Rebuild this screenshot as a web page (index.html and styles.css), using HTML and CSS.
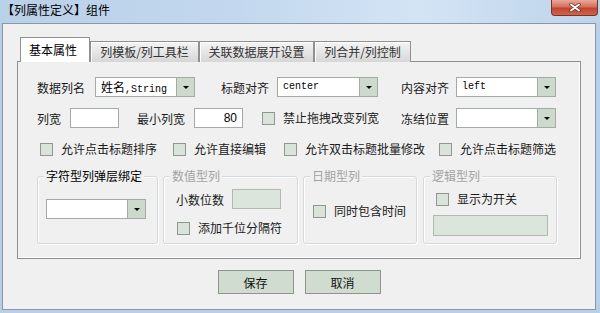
FILE: index.html
```html
<!DOCTYPE html>
<html lang="zh-CN">
<head>
    <meta charset="UTF-8">
    <title>列属性定义</title>
    <link rel="stylesheet" href="styles.css">
</head>
<body>
    <div class="window">
        <div class="titlebar">
            <span class="title">【列属性定义】组件</span>
            <div class="close">
                <svg width="12" height="9" viewBox="0 0 12 9">
                    <path d="M2 1.5 L10 7.5 M10 1.5 L2 7.5" stroke="#6a2a1c" stroke-width="3.4" stroke-linecap="round"/>
                    <path d="M2 1.5 L10 7.5 M10 1.5 L2 7.5" stroke="#ffffff" stroke-width="2" stroke-linecap="round"/>
                </svg>
            </div>
        </div>

        <div class="client">
            <div class="tabs">
                <div class="tab active">基本属性</div>
                <div class="tab t2">列模板/列工具栏</div>
                <div class="tab t3">关联数据展开设置</div>
                <div class="tab t4">列合并/列控制</div>
            </div>

            <div class="panel">
                <!-- row 1 -->
                <div class="row row1">
                    <span class="lbl w58">数据列名</span>
                    <div class="combo w100"><span class="val"><span class="cn">姓名</span>,String</span><span class="drop"></span></div>
                    <span class="lbl w56 ml26">标题对齐</span>
                    <div class="combo w101"><span class="val">center</span><span class="drop"></span></div>
                    <span class="lbl w55 ml23">内容对齐</span>
                    <div class="combo w100"><span class="val">left</span><span class="drop"></span></div>
                </div>

                <!-- row 2 -->
                <div class="row row2">
                    <span class="lbl w33">列宽</span>
                    <div class="input w49"></div>
                    <span class="lbl w57 ml18">最小列宽</span>
                    <div class="input w49 num">80</div>
                    <label class="chk ml19 w139"><span class="box"></span>禁止拖拽改变列宽</label>
                    <span class="lbl w55">冻结位置</span>
                    <div class="combo w100"><span class="val"></span><span class="drop"></span></div>
                </div>

                <!-- row 3 -->
                <div class="row row3">
                    <label class="chk w133"><span class="box"></span>允许点击标题排序</label>
                    <label class="chk w111"><span class="box"></span>允许直接编辑</label>
                    <label class="chk w155"><span class="box"></span>允许双击标题批量修改</label>
                    <label class="chk"><span class="box"></span>允许点击标题筛选</label>
                </div>

                <!-- type groups -->
                <div class="groups">
                    <div class="group g1">
                        <span class="legend">字符型列弹层绑定</span>
                        <div class="combo w100"><span class="val"></span><span class="drop"></span></div>
                    </div>
                    <div class="group g2">
                        <span class="legend off">数值型列</span>
                        <div class="line">
                            <span class="lbl w56">小数位数</span>
                            <div class="input w49 disabled"></div>
                        </div>
                        <label class="chk sep"><span class="box"></span>添加千位分隔符</label>
                    </div>
                    <div class="group g3">
                        <span class="legend off">日期型列</span>
                        <label class="chk"><span class="box"></span>同时包含时间</label>
                    </div>
                    <div class="group g4">
                        <span class="legend off">逻辑型列</span>
                        <label class="chk"><span class="box"></span>显示为开关</label>
                        <div class="input wide disabled"></div>
                    </div>
                </div>
            </div>

            <div class="buttons">
                <button class="btn">保存</button>
                <button class="btn">取消</button>
            </div>
        </div>
    </div>
</body>
</html>
```

FILE: styles.css
```css
body {
    margin: 0;
    width: 600px;
    height: 313px;
    overflow: hidden;
    background: #b7cfe9;
    font-family: 'Noto Sans CJK SC', 'Liberation Sans', sans-serif;
    font-size: 12px;
    color: #1a1a1a;
}

.window {
    width: 600px;
    height: 313px;
}

/* Title bar */
.titlebar {
    height: 23px;
    display: flex;
    justify-content: space-between;
    align-items: flex-start;
    background: linear-gradient(to right, #b9d0e9, #c3d8ee 40%, #d3e4f5 70%, #bdd3ea);
}

.title {
    padding-left: 2px;
    line-height: 20px;
    color: #000;
}

.close {
    width: 45px;
    height: 15px;
    margin-right: 2px;
    border: 1px solid #7a3328;
    border-top: none;
    border-radius: 0 0 4px 4px;
    background: linear-gradient(to bottom, #e9a99b, #d4715d 45%, #c0452e 55%, #d1644a);
    display: flex;
    align-items: center;
    justify-content: center;
}

/* Client area */
.client {
    box-sizing: border-box;
    margin-left: 2px;
    width: 594px;
    height: 287px;
    border: 1px solid #8898aa;
    background: #f0f0f0;
}

.tabs {
    display: flex;
    align-items: flex-end;
    height: 25px;
    margin: 13px 0 -1px 14px;
    padding-left: 3px;
}

.tab {
    box-sizing: border-box;
    height: 21px;
    border: 1px solid #8e9094;
    border-bottom: none;
    background: linear-gradient(to bottom, #f4f4f4, #e6e6e6 50%, #d6d6d6);
    box-shadow: inset 1px 1px 0 #fff;
    color: #333;
    line-height: 19px;
    text-align: center;
}

.tab.active {
    position: relative;
    width: 70px;
    height: 25px;
    background: #fff;
    box-shadow: none;
    color: #000;
    line-height: 23px;
    text-align: left;
    padding-left: 8px;
}

.t2 { width: 109px; }
.t3 { width: 115px; }
.t4 { width: 97px; }

.panel {
    box-sizing: border-box;
    margin-left: 14px;
    width: 564px;
    height: 198px;
    border: 1px solid #8e9094;
    box-shadow: inset -1px -1px 0 #fff;
    padding-left: 19px;
}

.row {
    display: flex;
    align-items: center;
    height: 20px;
}

.row1 { margin-top: 15px; }
.row2 { margin-top: 11px; }
.row3 { margin-top: 13px; height: 16px; padding-left: 3px; }

.lbl {
    flex: none;
    white-space: nowrap;
}

.w33 { width: 33px; }
.w55 { width: 55px; }
.w56 { width: 56px; }
.w57 { width: 57px; }
.w58 { width: 58px; }
.w111 { width: 111px; }
.w133 { width: 133px; }
.w139 { width: 139px; }
.w155 { width: 155px; }
.ml18 { margin-left: 18px; }
.ml19 { margin-left: 19px; }
.ml23 { margin-left: 23px; }
.ml26 { margin-left: 26px; }

/* Combo boxes */
.combo {
    box-sizing: border-box;
    flex: none;
    height: 20px;
    display: flex;
    border: 1px solid #a4aaa4;
    background: #fff;
}

.combo.w100 { width: 100px; }
.combo.w101 { width: 101px; }

.combo .val {
    flex: 1;
    padding-left: 5px;
    font-family: 'Liberation Mono', 'Noto Sans CJK SC', monospace;
    font-size: 10px;
    line-height: 18px;
    color: #000;
    white-space: nowrap;
    overflow: hidden;
}

.combo .val .cn {
    font-family: 'Noto Sans CJK SC', sans-serif;
    font-size: 12px;
}

.drop {
    width: 17px;
    border-left: 1px solid #a4aaa4;
    background: #ccd9cc;
    display: flex;
    align-items: center;
    justify-content: center;
}

.drop::after {
    content: "";
    border-left: 3px solid transparent;
    border-right: 3px solid transparent;
    border-top: 3px solid #000;
}

/* Text inputs */
.input {
    box-sizing: border-box;
    flex: none;
    height: 20px;
    border: 1px solid #a4aaa4;
    background: #fff;
}

.input.w49 { width: 49px; }

.input.num {
    text-align: right;
    padding-right: 5px;
    font-family: 'Liberation Sans', sans-serif;
    line-height: 18px;
    color: #000;
}

.input.disabled {
    background: #dbe5db;
    border-color: #b0b8b0;
}

.input.wide {
    width: 115px;
    height: 21px;
    margin: 8px 0 0 -3px;
}

/* Check boxes */
.chk {
    flex: none;
    display: flex;
    align-items: center;
    white-space: nowrap;
    line-height: 16px;
}

.box {
    box-sizing: border-box;
    width: 13px;
    height: 13px;
    margin-right: 8px;
    border: 1px solid #8f988f;
    background: #d9e3d9;
}

/* Group boxes */
.groups {
    display: flex;
    margin-top: 19px;
}

.group {
    position: relative;
    box-sizing: border-box;
    flex: none;
    height: 68px;
    border: 1px solid #d6d9dc;
    border-radius: 3px;
    box-shadow: inset 1px 1px 0 #fff, 1px 1px 0 #fff;
}

.legend {
    position: absolute;
    top: -9px;
    left: 6px;
    padding: 0 2px;
    background: #f0f0f0;
    line-height: 16px;
    color: #000;
}

.legend.off {
    color: #a3a3a3;
}

.g1 { width: 121px; padding: 22px 0 0 8px; }
.g2 { width: 135px; margin-left: 5px; padding: 12px 0 0 12px; }
.g3 { width: 114px; margin-left: 5px; padding: 26px 0 0 9px; }
.g4 { width: 134px; margin-left: 6px; padding: 14px 0 0 12px; }

.g2 .line {
    display: flex;
    align-items: center;
}

.g2 .sep {
    margin: 11px 0 0 1px;
}

/* Dialog buttons */
.buttons {
    display: flex;
    justify-content: center;
    gap: 11px;
    margin-top: 11px;
}

.btn {
    width: 76px;
    height: 24px;
    padding: 0;
    border: 1px solid #8b958b;
    background: #cfdccf;
    font-family: 'Noto Sans CJK SC', sans-serif;
    font-size: 12px;
    color: #111;
}
```
